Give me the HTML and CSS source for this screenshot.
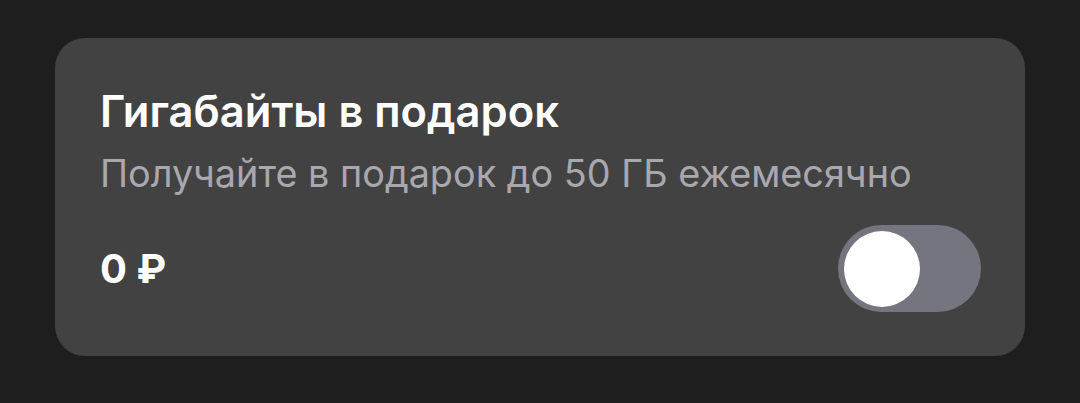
FILE: index.html
```html
<!DOCTYPE html>
<html lang="ru">
	<head>
		<meta charset="UTF-8">
		<meta name="viewport" content="width=device-width, initial-scale=1.0">
		<title>Гигабайты в подарок</title>
		<link rel="stylesheet" href="styles.css">
	</head>
	<body>
		<main>
			<section class="card">
				<h1 class="title">Гигабайты в подарок</h1>
				<p class="subtitle">Получайте в подарок до 50 ГБ ежемесячно</p>
				<div class="row">
					<span class="price">0 ₽</span>
					<span class="toggle"><span class="knob"></span></span>
				</div>
			</section>
		</main>
	</body>
</html>
```

FILE: styles.css
```css
html, body{
	margin: 0;
	background-color: #1e1e1e;
}
main{
	padding: 38px 55px;
	font-family: Inter, "Noto Sans", sans-serif;
}
.card{
	height: 318px;
	box-sizing: border-box;
	background-color: #424242;
	border-radius: 30px;
	padding: 48px 44px 0 45px;
	display: flex;
	flex-direction: column;
}
.title{
	margin: 0;
	font-size: 43.5px;
	line-height: 50px;
	font-weight: 600;
	color: #ffffff;
}
.subtitle{
	margin: 14px 0 0;
	font-size: 37.8px;
	line-height: 46px;
	color: #a8a8ae;
}
.row{
	display: flex;
	align-items: center;
	justify-content: space-between;
	margin-top: 29px;
}
.price{
	font-size: 40px;
	line-height: 50px;
	font-weight: 700;
	color: #ffffff;
}
.toggle{
	width: 143px;
	height: 87px;
	box-sizing: border-box;
	padding: 6px;
	border-radius: 44px;
	background-color: #75757f;
	display: flex;
}
.knob{
	width: 76px;
	height: 76px;
	border-radius: 50%;
	background-color: #ffffff;
}
```
